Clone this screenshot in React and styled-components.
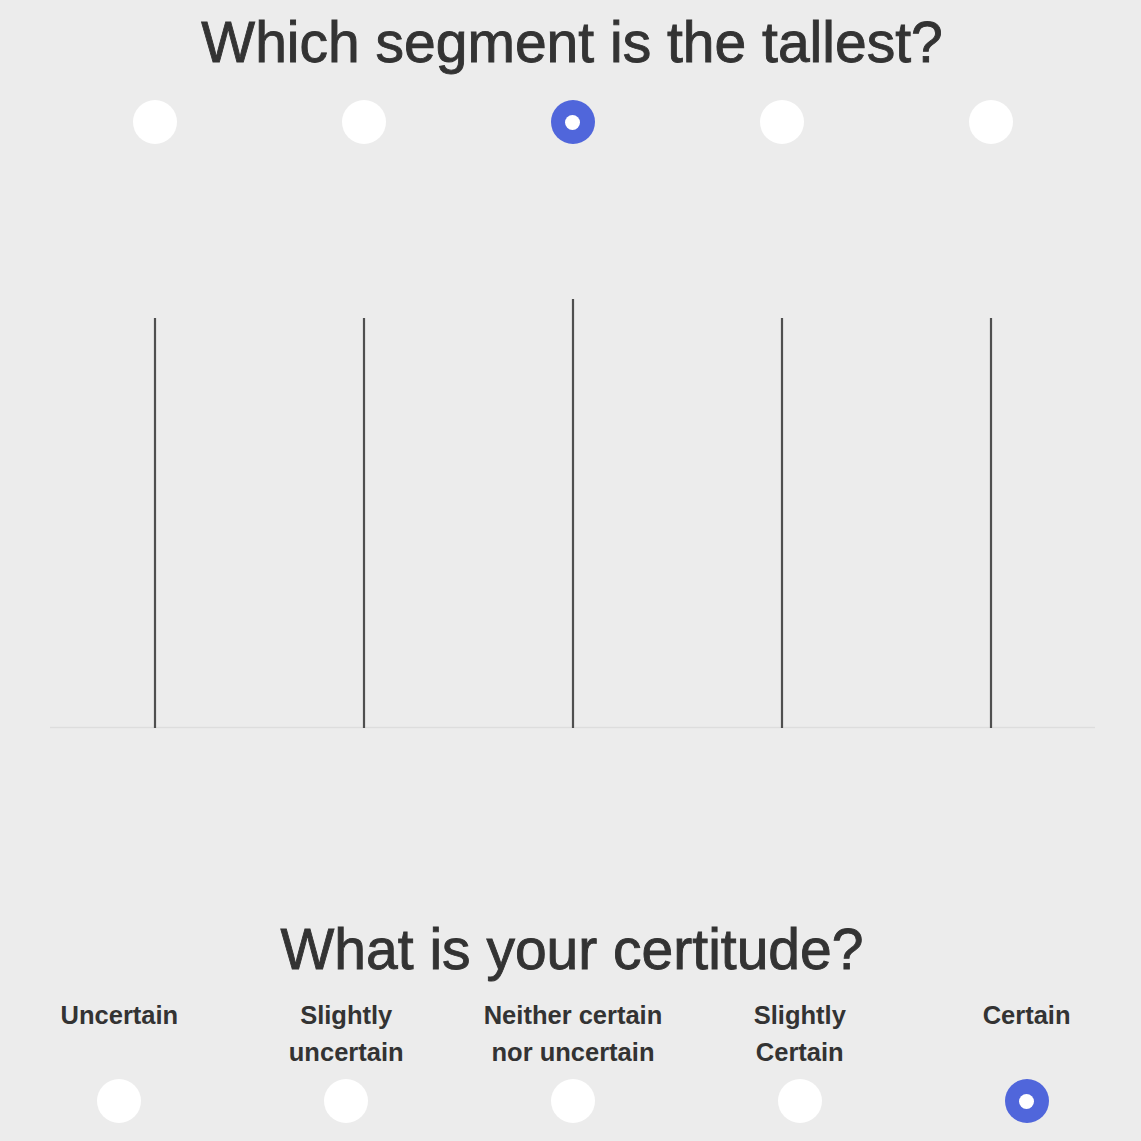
import React, { useState } from "react";
import styled, { createGlobalStyle } from "styled-components";

const segments = [410, 410, 429, 410, 410];
const certitudes = [
  "Uncertain",
  "Slightly uncertain",
  "Neither certain nor uncertain",
  "Slightly Certain",
  "Certain",
];

export default function App() {
  const [tallest, setTallest] = useState(2);
  const [certitude, setCertitude] = useState(4);

  return (
    <>
      <GlobalStyle />
      <Page>
        <Question>Which segment is the tallest?</Question>
        <ChoiceRow>
          {segments.map((_, i) => (
            <Cell key={i}>
              <Radio $checked={tallest === i} onClick={() => setTallest(i)} />
            </Cell>
          ))}
        </ChoiceRow>

        <Chart viewBox="0 0 1045 586" width="1045" height="586">
          <line x1="0" y1="584.5" x2="1045" y2="584.5" stroke="#dddddd" strokeWidth="1.5" />
          {segments.map((h, i) => (
            <line
              key={i}
              x1={105 + i * 209}
              x2={105 + i * 209}
              y1={585 - h}
              y2={585}
              stroke="#4f4f4f"
              strokeWidth="2.2"
            />
          ))}
        </Chart>

        <Question $top={187}>What is your certitude?</Question>
        <ScaleRow>
          {certitudes.map((label, i) => (
            <ScaleCell key={i}>
              <Label>{label}</Label>
              <Radio $checked={certitude === i} onClick={() => setCertitude(i)} />
            </ScaleCell>
          ))}
        </ScaleRow>
      </Page>
    </>
  );
}

const GlobalStyle = createGlobalStyle`
  html, body {
    margin: 0;
    background: #ececec;
  }
  body {
    font-family: "Liberation Sans", Arial, Helvetica, sans-serif;
    color: #333333;
  }
`;

const Page = styled.div`
  width: 1141px;
  height: 1141px;
  overflow: hidden;
  display: flex;
  flex-direction: column;
  align-items: center;
  padding-top: 9px;
  box-sizing: border-box;
`;

const Question = styled.h1`
  margin: ${(p) => p.$top || 0}px 0 0 3px;
  font-size: 57px;
  line-height: 66px;
  font-weight: 400;
  -webkit-text-stroke: 0.9px #333333;
  color: #333333;
  text-align: center;
`;

const ChoiceRow = styled.div`
  display: grid;
  grid-template-columns: repeat(5, 1fr);
  width: 1045px;
  align-self: flex-start;
  margin: 25px 0 0 50px;
`;

const Cell = styled.div`
  display: flex;
  justify-content: center;
`;

const Radio = styled.div`
  width: 44px;
  height: 44px;
  border-radius: 50%;
  background: ${(p) => (p.$checked ? "#5066db" : "#ffffff")};
  display: flex;
  align-items: center;
  justify-content: center;
  cursor: pointer;

  &::after {
    content: "";
    display: ${(p) => (p.$checked ? "block" : "none")};
    width: 15px;
    height: 15px;
    border-radius: 50%;
    background: #ffffff;
  }
`;

const Chart = styled.svg`
  display: block;
  align-self: flex-start;
  margin: -1px 0 0 50px;
`;

const ScaleRow = styled.div`
  display: grid;
  grid-template-columns: repeat(5, 1fr);
  width: 1134px;
  align-self: flex-start;
  margin: 15px 0 0 6px;
`;

const ScaleCell = styled.div`
  display: flex;
  flex-direction: column;
  align-items: center;
  gap: 8px;
`;

const Label = styled.div`
  height: 74px;
  width: 184px;
  font-size: 25.5px;
  line-height: 37px;
  font-weight: 700;
  text-align: center;
  color: #333333;
`;
